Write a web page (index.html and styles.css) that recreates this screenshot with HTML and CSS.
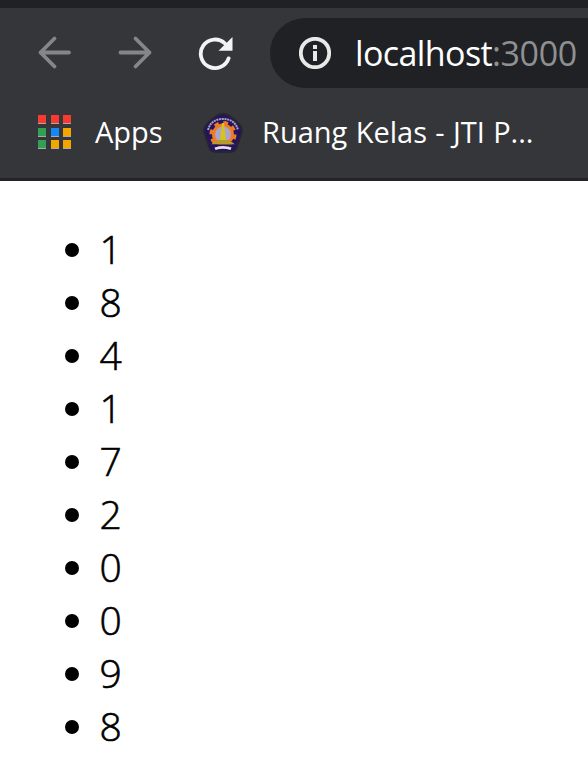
FILE: index.html
```html
<!DOCTYPE html>
<html lang="en">
<head>
<meta charset="utf-8">
<title>localhost:3000</title>
<link rel="stylesheet" href="styles.css">
</head>
<body>
<header class="browser">
  <div class="tabstrip"></div>
  <nav class="toolbar">
    <svg class="nav-icon back" viewBox="0 0 36 36"><path d="M33 17.500H4.500M18.500 3.500l-14 14 14 14"/></svg>
    <svg class="nav-icon forward" viewBox="0 0 36 36"><path d="M3.500 17.500h29M18.500 3.500l14 14-14 14"/></svg>
    <svg class="nav-icon reload" viewBox="0 0 36 36"><path class="ring" d="M31.600 23.400A14.300 14.300 0 1 1 28 8.500"/><path class="tip" d="M35.500 2V15.800H21.500z"/></svg>
    <div class="address">
      <svg class="info" viewBox="0 0 32 32"><circle cx="16" cy="16" r="14.2"/><path d="M14 8h4v4h-4zM14 14h4v10h-4z"/></svg>
      <span class="host">localhost</span><span class="port">:3000</span>
    </div>
  </nav>
  <div class="bookmarks">
    <div class="apps-grid"><i class="red"></i><i class="red"></i><i class="red"></i><i class="green"></i><i class="blue"></i><i class="amber"></i><i class="green"></i><i class="amber"></i><i class="amber"></i></div>
    <span class="apps-label">Apps</span>
    <svg class="crest" viewBox="0 0 40 40">
      <path d="M14 2.500Q20-.5 26 2.500 33 7 37.500 13q2 3 1 7l-5 15q-1.500 4-6 4h-15q-4.500 0-6-4l-5-15q-1-4 1-7Q7 7 14 2.500z" fill="#24145f" stroke="#28262d" stroke-width="2"/>
      <path d="M5 17Q8 6 20 6t15 11" fill="none" stroke="#aaa5c4" stroke-width="2" stroke-dasharray="2 .7"/>
      <circle cx="20" cy="21.500" r="12" fill="none" stroke="#ef7b22" stroke-width="3" stroke-dasharray="4.700 4.725"/>
      <circle cx="20" cy="21.500" r="9.500" fill="#aaa3cb" stroke="#ef7b22" stroke-width="3"/>
      <path d="M19 10h2l2 18h-6z" fill="#d5c51a"/>
      <path d="M15 27h10v2H15zM11 29h18l3 2.500H8z" fill="#b69c29"/>
      <path d="M6 31.500h28v2H6z" fill="#24145f"/>
      <path d="M11.500 34.500q8.500-3 17 0l-1 2.500q-7.500-2.500-15 0z" fill="#e5e2ed"/>
    </svg>
    <span class="class-label">Ruang Kelas - JTI P...</span>
  </div>
</header>
<main>
  <ul class="digits">
    <li><span>1</span></li><li><span>8</span></li><li><span>4</span></li><li><span>1</span></li><li><span>7</span></li><li><span>2</span></li><li><span>0</span></li><li><span>0</span></li><li><span>9</span></li><li><span>8</span></li>
  </ul>
</main>
</body>
</html>
```
FILE: styles.css
```css
* { box-sizing: border-box; }
body {
  margin: 0;
  background: #fff;
  color: #000;
  font-family: "Open Sans", "Noto Sans", sans-serif;
  overflow: hidden;
}
.browser {
  height: 181px;
  background: #35363a;
  border-bottom: 3px solid #242426;
}
.tabstrip { height: 8px; background: #202124; }
.toolbar {
  height: 90px;
  display: flex;
  align-items: center;
  padding-left: 36px;
}
.nav-icon {
  flex: none;
  width: 36px;
  height: 36px;
  fill: none;
  stroke: #85868a;
  stroke-width: 3.8;
  stroke-linecap: round;
  stroke-linejoin: round;
}
.forward { margin-left: 45px; }
.reload { margin-left: 44px; }
.reload .ring { stroke: #f1f3f4; }
.reload .tip { fill: #f1f3f4; stroke: none; }
.address {
  flex: 1;
  height: 70px;
  margin-left: 37px;
  padding-left: 29px;
  display: flex;
  align-items: center;
  border-radius: 35px 0 0 35px;
  background: #202124;
  color: #fff;
  font-size: 34px;
  line-height: 46px;
  white-space: nowrap;
}
.info { flex: none; width: 32px; height: 32px; margin-right: 24px; fill: #e8e8e8; }
.info circle { fill: none; stroke: #e8e8e8; stroke-width: 3.8; }
.host { letter-spacing: -0.6px; }
.port { color: #8f9092; letter-spacing: -0.4px; }
.bookmarks {
  height: 70px;
  display: flex;
  align-items: center;
  padding-left: 38px;
  color: #fff;
  font-size: 29px;
  line-height: 40px;
  white-space: nowrap;
}
.apps-grid {
  display: grid;
  grid-template-columns: repeat(3, 8px);
  column-gap: 4.5px;
  row-gap: 3.5px;
  width: 34px;
  margin-bottom: 2px;
}
.apps-grid i { height: 9px; border-bottom: 1px solid #aaa; }
.red { background: #fa3a30; }
.green { background: #31a052; }
.blue { background: #1687f5; }
.amber { background: #f3a500; }
.apps-label { width: 68px; margin-left: 23px; padding-bottom: 2px; }
.crest { flex: none; width: 40px; height: 40px; margin-left: 40px; }
.class-label { margin-left: 19px; padding-bottom: 2px; word-spacing: 0.8px; }
.digits {
  margin: 42px 0 0;
  padding: 0;
  list-style: none;
  font-size: 39px;
  font-weight: 300;
  line-height: 53px;
  -webkit-text-stroke: 0.6px #000;
}
.digits li {
  display: flex;
  align-items: center;
  height: 53px;
  padding-left: 65px;
}
.digits span { padding-bottom: 2px; }
.digits li::before {
  content: "";
  width: 14px;
  height: 14px;
  margin-right: 20.5px;
  border-radius: 50%;
  background: #000;
}
```
